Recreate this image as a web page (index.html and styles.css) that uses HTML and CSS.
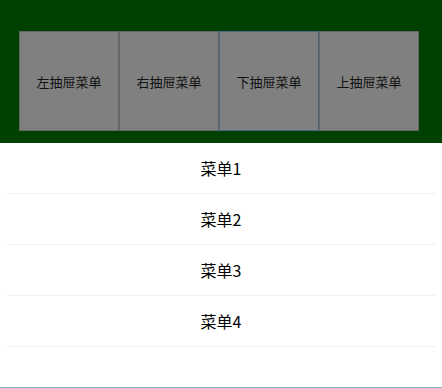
FILE: index.html
```html
<!DOCTYPE html>
<html lang="zh">
<head>
<meta charset="utf-8">
<link rel="stylesheet" href="styles.css">
</head>
<body>
<div class="page">
  <div class="header">
    <div class="btn">左抽屉菜单</div>
    <div class="btn">右抽屉菜单</div>
    <div class="btn active">下抽屉菜单</div>
    <div class="btn">上抽屉菜单</div>
  </div>
  <ul class="menu">
    <li class="item">菜单1</li>
    <li class="item">菜单2</li>
    <li class="item">菜单3</li>
    <li class="item">菜单4</li>
  </ul>
</div>
</body>
</html>
```
FILE: styles.css
```css
html, body {
  margin: 0;
  padding: 0;
  background: #fff;
}
.page {
  height: 388px;
  box-sizing: border-box;
  border-bottom: 1px solid #86b4cf;
  font-family: "Noto Sans CJK SC", "Noto Sans", sans-serif;
}
.header {
  height: 143px;
  box-sizing: border-box;
  background: #004000;
  padding: 31px 0 0 19px;
  display: flex;
  align-items: flex-start;
}
.btn {
  width: 100px;
  height: 100px;
  box-sizing: border-box;
  border: 1px solid #666;
  background: #808080;
  color: #111;
  font-size: 13px;
  display: flex;
  align-items: center;
  justify-content: center;
}
.btn.active {
  border-color: #4b6587;
}
.menu {
  list-style: none;
  margin: 0 7px;
  padding: 0;
}
.item {
  height: 51px;
  box-sizing: border-box;
  border-bottom: 1px solid #f0f0f0;
  line-height: 50px;
  text-align: center;
  font-size: 16px;
  color: #000;
}
```
